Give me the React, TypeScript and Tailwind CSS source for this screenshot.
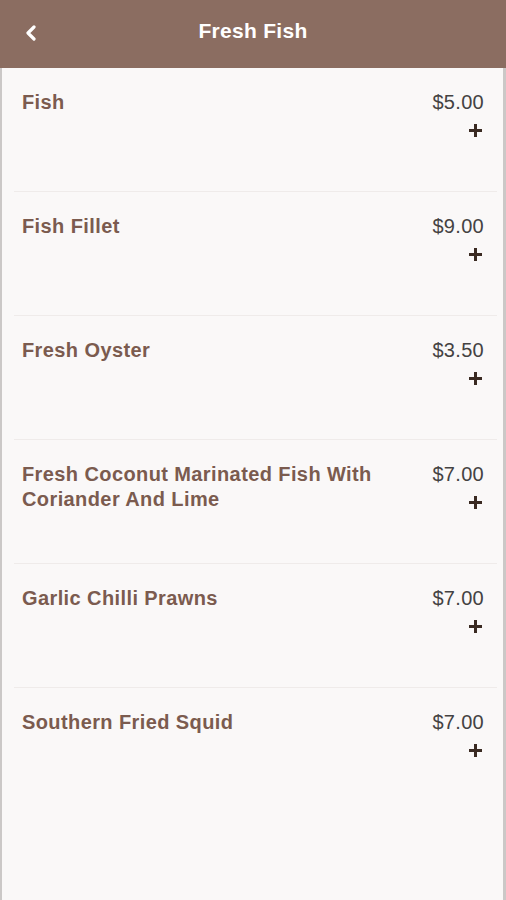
import React from "react";

const items = [
  { name: "Fish", price: "$5.00" },
  { name: "Fish Fillet", price: "$9.00" },
  { name: "Fresh Oyster", price: "$3.50" },
  { name: "Fresh Coconut Marinated Fish With Coriander And Lime", price: "$7.00" },
  { name: "Garlic Chilli Prawns", price: "$7.00" },
  { name: "Southern Fried Squid", price: "$7.00" },
];

export default function App() {
  return (
    <div
      className="w-[506px] h-[900px] flex flex-col bg-[#faf8f8] overflow-hidden"
      style={{ fontFamily: '"Liberation Sans", Arial, sans-serif' }}
    >
      <div className="h-[68px] shrink-0 bg-[#8b6d61] relative flex items-center justify-center">
        <svg
          className="absolute left-[25px] top-[25px]"
          width="12"
          height="16"
          viewBox="0 0 12 16"
          fill="none"
        >
          <polyline
            points="9,2 3,8 9,14"
            stroke="#ffffff"
            strokeWidth="3.2"
            strokeLinecap="round"
            strokeLinejoin="round"
          />
        </svg>
        <span className="text-white font-bold text-[21px] tracking-[0.3px] mt-[-6px]">Fresh Fish</span>
      </div>
      <div className="flex-1 border-l-2 border-r-[3px] border-[#cbc8c7] flex flex-col">
        {items.map((it, i) => (
          <div key={i} className="h-[124px] shrink-0 flex flex-col">
            <div className="flex-1 flex justify-between pl-[20px] pr-[19px] pt-[22px]">
              <div className="text-[20px] leading-[25px] font-bold tracking-[0.4px] text-[#7b5b4f] w-[380px]">
                {it.name}
              </div>
              <div className="flex flex-col items-end">
                <div className="text-[20px] leading-[25px] tracking-[0.3px] text-[#444242]">{it.price}</div>
                <svg width="15" height="15" viewBox="0 0 15 15" className="mt-[8px] mr-[1px]">
                  <path d="M7.5 1 V14 M1 7.5 H14" stroke="#3a2a22" strokeWidth="3" />
                </svg>
              </div>
            </div>
            {i < items.length - 1 && <div className="h-px ml-[12px] mr-[6px] bg-[#efebea]" />}
          </div>
        ))}
      </div>
    </div>
  );
}
